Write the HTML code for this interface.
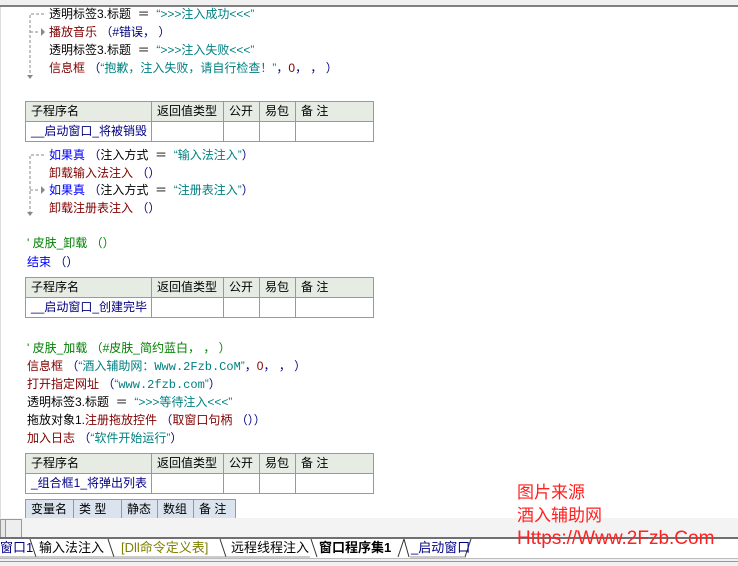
<!DOCTYPE html>
<html><head><meta charset="utf-8"><style>
body{margin:0;width:738px;height:565px;overflow:hidden;background:#fff;position:relative;font-family:"Liberation Sans","Noto Sans CJK SC","WenQuanYi Zen Hei",sans-serif;font-size:12px}
.l{position:absolute;white-space:nowrap;line-height:18px;height:18px}
.k{color:#000}.r{color:#800000}.b{color:#0000ff}.n{color:#000080}.t{color:#008080}.g{color:#008000}
table{position:absolute;border-collapse:collapse;font-size:12px;table-layout:fixed}
td{border:1px solid #999;height:19px;padding:0 0 0 5px;line-height:19px;white-space:nowrap;overflow:hidden}
tr.h td{background:#e6ece4}
.vt td{background:#dbe4ee;border-color:#999}
.mono{font-family:"Liberation Mono",monospace;font-size:12px}
.tab{position:absolute;top:539px;height:18px;line-height:18px;font-size:13px;white-space:nowrap}
.p{margin:0 4px}
</style></head><body>
<div style="position:absolute;left:0;top:0;width:738px;height:5px;background:#f0f0f0"></div>
<div style="position:absolute;left:0;top:5px;width:738px;height:2px;background:#808080"></div>
<div style="position:absolute;left:0;top:7px;width:1px;height:511px;background:#ddd"></div>
<svg style="position:absolute;left:0;top:0" width="60" height="220">
<g stroke="#888" stroke-dasharray="3,2" fill="none">
<path d="M44 14H30V78"/><path d="M30 32H40"/>
<path d="M44 155H30V215"/><path d="M30 190H40"/>
</g>
<g fill="#888"><path d="M41 28l4 4-4 4z"/><path d="M27 75h6l-3 4z"/><path d="M41 186l4 4-4 4z"/><path d="M27 212h6l-3 4z"/></g>
</svg>
<div class="l k" style="left:49px;top:5px">透明标签3.标题 &nbsp;＝&nbsp; <span class="t">“&gt;&gt;&gt;注入成功&lt;&lt;&lt;”</span></div>
<div class="l r" style="left:49px;top:23px">播放音乐 <span class="n">（#错误，&nbsp;）</span></div>
<div class="l k" style="left:49px;top:41px">透明标签3.标题 &nbsp;＝&nbsp; <span class="t">“&gt;&gt;&gt;注入失败&lt;&lt;&lt;”</span></div>
<div class="l r" style="left:49px;top:59px">信息框 <span class="n">（</span><span class="t">“抱歉，注入失败，请自行检查！”</span><span class="n">，</span>0<span class="n">，&nbsp;，&nbsp;）</span></div>

<table style="left:25px;top:101px;width:349px">
<colgroup><col style="width:126px"><col style="width:72px"><col style="width:36px"><col style="width:36px"><col></colgroup>
<tr class="h"><td>子程序名</td><td>返回值类型</td><td>公开</td><td>易包</td><td>备 注</td></tr>
<tr><td class="n">__启动窗口_将被销毁</td><td></td><td></td><td></td><td></td></tr></table>

<div class="l b" style="left:49px;top:146px">如果真 <span class="n">（</span><span class="k">注入方式 &nbsp;＝&nbsp; </span><span class="t">“输入法注入”</span><span class="n">）</span></div>
<div class="l r" style="left:49px;top:164px">卸载输入法注入 <span class="n">（）</span></div>
<div class="l b" style="left:49px;top:181px">如果真 <span class="n">（</span><span class="k">注入方式 &nbsp;＝&nbsp; </span><span class="t">“注册表注入”</span><span class="n">）</span></div>
<div class="l r" style="left:49px;top:199px">卸载注册表注入 <span class="n">（）</span></div>

<div class="l g" style="left:27px;top:234px">' 皮肤_卸载 （）</div>
<div class="l b" style="left:27px;top:253px">结束 <span class="n">（）</span></div>

<table style="left:25px;top:277px;width:349px">
<colgroup><col style="width:126px"><col style="width:72px"><col style="width:36px"><col style="width:36px"><col></colgroup>
<tr class="h"><td>子程序名</td><td>返回值类型</td><td>公开</td><td>易包</td><td>备 注</td></tr>
<tr><td class="n">__启动窗口_创建完毕</td><td></td><td></td><td></td><td></td></tr></table>

<div class="l g" style="left:27px;top:339px">' 皮肤_加载 （#皮肤_简约蓝白，&nbsp;，&nbsp;）</div>
<div class="l r" style="left:27px;top:357px">信息框 <span class="n">（</span><span class="t">“酒入辅助网：<span class="mono">Www.2Fzb.CoM</span>”</span><span class="n">，</span>0<span class="n">，&nbsp;，&nbsp;）</span></div>
<div class="l r" style="left:27px;top:375px">打开指定网址 <span class="n">（</span><span class="t">“<span class="mono">www.2fzb.com</span>”</span><span class="n">）</span></div>
<div class="l k" style="left:27px;top:393px">透明标签3.标题 &nbsp;＝&nbsp; <span class="t">“&gt;&gt;&gt;等待注入&lt;&lt;&lt;”</span></div>
<div class="l k" style="left:27px;top:411px">拖放对象1.<span class="r">注册拖放控件</span> <span class="n">（</span><span class="r">取窗口句柄</span> <span class="n">（））</span></div>
<div class="l r" style="left:27px;top:429px">加入日志 <span class="n">（</span><span class="t">“软件开始运行”</span><span class="n">）</span></div>

<table style="left:25px;top:453px;width:349px">
<colgroup><col style="width:126px"><col style="width:72px"><col style="width:36px"><col style="width:36px"><col></colgroup>
<tr class="h"><td>子程序名</td><td>返回值类型</td><td>公开</td><td>易包</td><td>备 注</td></tr>
<tr><td class="n">_组合框1_将弹出列表</td><td></td><td></td><td></td><td></td></tr></table>

<table class="vt" style="left:25px;top:499px;width:211px">
<colgroup><col style="width:48px"><col style="width:48px"><col style="width:36px"><col style="width:36px"><col></colgroup>
<tr><td>变量名</td><td>类 型</td><td>静态</td><td>数组</td><td>备 注</td></tr></table>

<div style="position:absolute;left:0;top:518px;width:738px;height:19px;background:#f3f3f3"></div>
<div style="position:absolute;left:0;top:519px;width:4px;height:17px;background:#e8e8e8;border:1px solid #999"></div>
<div style="position:absolute;left:5px;top:519px;width:15px;height:17px;background:#eee;border:1px solid #999"></div>
<div style="position:absolute;left:0;top:537px;width:738px;height:2px;background:#707070"></div>
<div style="position:absolute;left:0;top:558px;width:738px;height:7px;background:#f0f0f0;border-top:1px solid #bbb"></div>
<div style="position:absolute;left:0;top:561px;width:738px;height:1px;background:#999"></div>
<svg style="position:absolute;left:0;top:539px" width="480" height="20"><g stroke="#333" fill="none">
<path d="M30 0l6 18"/><path d="M108 0l6 18"/><path d="M220 0l6 18"/><path d="M311 0l6 18"/><path d="M398 18l6-18"/><path d="M404 0l5 18"/><path d="M471 0l-6 18"/>
<path d="M0 18H310M410 18H466" stroke="#999"/></g></svg>
<div class="tab n" style="left:0">窗口1</div>
<div class="tab k" style="left:39px">输入法注入</div>
<div class="tab" style="left:121px;color:#808000">[Dll命令定义表]</div>
<div class="tab k" style="left:231px">远程线程注入</div>
<div class="tab k" style="left:319px;font-weight:bold">窗口程序集1</div>
<div class="tab n" style="left:411px">_启动窗口</div>

<div style="position:absolute;left:517px;top:481px;color:#ff2020;font-size:17px;line-height:23px;white-space:nowrap">图片来源<br>酒入辅助网<br><span style="font-size:19px">Https://Www.2Fzb.Com</span></div>
</body></html>
